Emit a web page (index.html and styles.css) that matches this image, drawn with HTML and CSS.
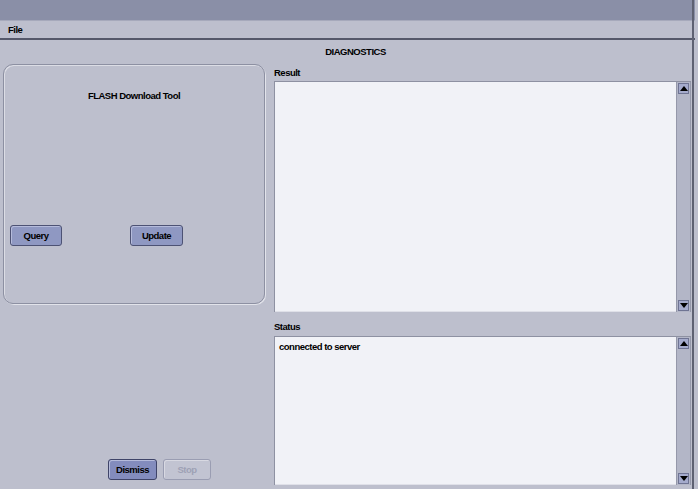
FILE: index.html
```html
<!DOCTYPE html>
<html>
<head>
<meta charset="utf-8">
<link rel="stylesheet" href="styles.css">
</head>
<body>
<div class="window">
  <div class="titlebar"></div>
  <div class="menubar"><span class="menu-item">File</span></div>
  <div class="content">
    <div class="heading">DIAGNOSTICS</div>
    <div class="main">
      <div class="left">
        <div class="panel">
          <div class="panel-title">FLASH Download Tool</div>
          <div class="panel-buttons">
            <button class="btn btn-query">Query</button>
            <button class="btn btn-update">Update</button>
          </div>
        </div>
        <div class="bottom-buttons">
          <button class="btn btn-focus">Dismiss</button>
          <button class="btn btn-disabled">Stop</button>
        </div>
      </div>
      <div class="right">
        <div class="label">Result</div>
        <div class="scrollpane result">
          <div class="textarea"></div>
          <div class="scrollbar">
            <div class="arrow up"><svg width="8" height="5" viewBox="0 0 8 5"><path d="M0 5 L4 0 L8 5 Z" fill="#000"/></svg></div>
            <div class="arrow down"><svg width="8" height="5" viewBox="0 0 8 5"><path d="M0 0 L8 0 L4 5 Z" fill="#000"/></svg></div>
          </div>
        </div>
        <div class="label status-label">Status</div>
        <div class="scrollpane status">
          <div class="textarea"><div class="line">connected to server</div></div>
          <div class="scrollbar">
            <div class="arrow up"><svg width="8" height="5" viewBox="0 0 8 5"><path d="M0 5 L4 0 L8 5 Z" fill="#000"/></svg></div>
            <div class="arrow down"><svg width="8" height="5" viewBox="0 0 8 5"><path d="M0 0 L8 0 L4 5 Z" fill="#000"/></svg></div>
          </div>
        </div>
      </div>
    </div>
  </div>
</div>
</body>
</html>
```
FILE: styles.css
```css
html, body {
  margin: 0;
  padding: 0;
  background: #bdbfcd;
}
body {
  font-family: "Liberation Sans", Arial, sans-serif;
  font-size: 9.5px;
  font-weight: bold;
  letter-spacing: -0.5px;
  color: #000;
}
.window {
  width: 698px;
  height: 489px;
  box-sizing: border-box;
  display: flex;
  flex-direction: column;
  border-right: 3px solid #bdbfcd;
  position: relative;
  overflow: hidden;
}
.window::after {
  content: "";
  position: absolute;
  top: 0;
  bottom: 0;
  right: 1px;
  width: 2px;
  background: #5e6172;
}
.titlebar {
  height: 20px;
  background: #8a8fa7;
  border-bottom: 1px solid #a6a9bb;
}
.menubar {
  height: 17px;
  border-bottom: 2px solid #55586a;
  display: flex;
  align-items: center;
  padding-left: 8px;
}
.content {
  flex: 1;
  display: flex;
  flex-direction: column;
}
.heading {
  height: 24px;
  line-height: 24px;
  text-align: center;
  padding-left: 16px;
}
.main {
  flex: 1;
  display: flex;
  padding-bottom: 4px;
}
.left {
  width: 262px;
  margin-left: 3px;
  display: flex;
  flex-direction: column;
}
.panel {
  height: 238px;
  border: 1px solid #8d90a2;
  border-radius: 10px;
  box-shadow: inset 1px 1px 0 #dcdde5, 1px 1px 0 #e2e3ea;
  display: flex;
  flex-direction: column;
}
.panel-title {
  text-align: center;
  padding-top: 25px;
}
.panel-buttons {
  margin-top: 124px;
  display: flex;
  padding-left: 6px;
}
.btn {
  font-family: "Liberation Sans", Arial, sans-serif;
  font-weight: bold;
  font-size: 9.5px;
  letter-spacing: -0.5px;
  height: 21px;
  border: 1px solid #4d5274;
  border-radius: 3px;
  background: #8f98c2;
  box-shadow: inset 1px 1px 0 #b5bbdb;
  color: #000;
  padding: 0;
}
.btn-query {
  width: 52px;
}
.btn-update {
  width: 53px;
  margin-left: 68px;
}
.bottom-buttons {
  margin-top: auto;
  margin-bottom: 5px;
  display: flex;
  gap: 6px;
  padding-left: 105px;
}
.btn-focus {
  width: 49px;
  background: #838cbd;
  border-color: #3f4468;
}
.btn-disabled {
  width: 48px;
  background: #c2c4d2;
  border-color: #9a9db2;
  box-shadow: inset 1px 1px 0 #d8d9e2;
  color: #9ea1b5;
}
.right {
  flex: 1;
  margin-left: 9px;
  margin-right: 4px;
  display: flex;
  flex-direction: column;
}
.label {
  height: 16px;
  line-height: 16px;
  margin-top: 1px;
}
.status-label {
  margin-top: 7px;
  height: 17px;
}
.scrollpane {
  display: flex;
  border-top: 1px solid #8e91a2;
  border-left: 1px solid #8e91a2;
}
.result {
  height: 230px;
}
.status {
  flex: 1;
}
.textarea {
  flex: 1;
  background: #f1f2f7;
  border-bottom: 1px solid #dfe0e8;
}
.line {
  padding: 4px 0 0 4px;
}
.scrollbar {
  width: 13px;
  background: #b3b6c7;
  border-left: 1px solid #9598aa;
  border-right: 1px solid #9598aa;
  display: flex;
  flex-direction: column;
  justify-content: space-between;
}
.arrow {
  height: 11px;
  margin: 1px 0 1px 1px;
  width: 11px;
  background: #a5abcc;
  border: 1px solid #6f7493;
  box-sizing: border-box;
  display: flex;
  align-items: center;
  justify-content: center;
}
.arrow svg {
  display: block;
}
```
